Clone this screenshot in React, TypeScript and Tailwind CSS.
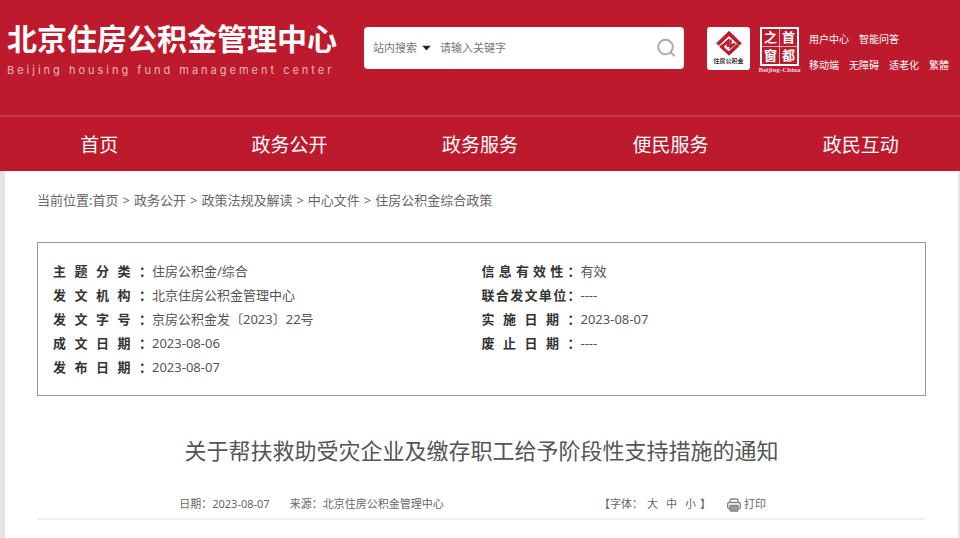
import { ReactNode } from "react";

const navItems = ["首页", "政务公开", "政务服务", "便民服务", "政民互动"];

const crumbs = ["首页", "政务公开", "政策法规及解读", "中心文件", "住房公积金综合政策"];

const quickLinks = [
  ["用户中心", "智能问答"],
  ["移动端", "无障碍", "适老化", "繁體"],
];

const leftInfo = [
  { label: "主题分类", value: "住房公积金/综合" },
  { label: "发文机构", value: "北京住房公积金管理中心" },
  { label: "发文字号", value: "京房公积金发〔2023〕22号" },
  { label: "成文日期", value: "2023-08-06" },
  { label: "发布日期", value: "2023-08-07" },
];

const rightInfo = [
  { label: "信息有效性", value: "有效" },
  { label: "联合发文单位", value: "----" },
  { label: "实施日期", value: "2023-08-07" },
  { label: "废止日期", value: "----" },
];

const FundLogo = () => (
  <a
    href="#"
    aria-label="住房公积金"
    className="flex h-[43px] w-[43px] shrink-0 flex-col items-center rounded-[3px] bg-white pt-1">
    <svg width="26" height="26" viewBox="0 0 26 26" className="shrink-0" fill="none" stroke="#bd1a2d">
      <path d="M1.500 13.500 13 2.500 24.500 13.500" strokeWidth="3.800" />
      <path d="M5 16.500 12 10v6" strokeWidth="2.600" />
      <path d="M4.500 14.500 13 22.500 22 14" strokeWidth="3.400" />
      <path d="M14.500 8.500v7.500l4.500-3.500" strokeWidth="2.400" />
      <path d="M8.500 15.500l3.500 3.500" stroke="#fff" strokeWidth="1.300" />
    </svg>
    <span className="text-[6px] leading-[8px] font-bold whitespace-nowrap text-[#333]">住房公积金</span>
  </a>
);

const CapitalSeal = () => (
  <a href="#" className="flex w-[43px] shrink-0 flex-col items-center">
    <span className="grid h-[39px] w-[39px] grid-cols-2 gap-px border-2 border-white bg-[#eba9b0] text-center text-[13px] leading-[17px] font-bold">
      {["之", "首", "窗", "都"].map((char) => (
        <span key={char} className="bg-[#bd1a2d]">
          {char}
        </span>
      ))}
    </span>
    <span className="font-['Liberation_Serif',serif] text-[7px] leading-[8px] font-bold whitespace-nowrap text-[#f6d5d8]">
      Beijing-China
    </span>
  </a>
);

const SearchBox = () => (
  <form
    onSubmit={(e) => e.preventDefault()}
    className="flex h-[42px] min-w-0 flex-1 items-center rounded-[4px] bg-white pr-2 pl-[9px] text-[11px] text-[#777]">
    <div className="relative shrink-0">
      <select aria-label="搜索范围" className="w-[60px] appearance-none bg-transparent leading-5 outline-none">
        <option>站内搜索</option>
      </select>
      <svg
        width="9"
        height="5"
        viewBox="0 0 9 5"
        className="pointer-events-none absolute top-1/2 right-0.5 -translate-y-1/2">
        <path d="M0 0h9L4.5 5z" fill="#222" />
      </svg>
    </div>
    <input
      type="text"
      aria-label="关键字"
      placeholder="请输入关键字"
      className="ml-[7px] min-w-0 flex-1 leading-5 outline-none placeholder:text-[#777]"
    />
    <button type="submit" aria-label="搜索" className="shrink-0">
      <svg width="20" height="20" viewBox="0 0 20 20" fill="none" stroke="#aaa" strokeWidth="2">
        <circle cx="9.5" cy="9" r="7.3" />
        <path d="m14.7 14.2 3.5 3.4" strokeLinecap="round" />
      </svg>
    </button>
  </form>
);

const Header = () => (
  <header className="bg-[#bd1a2d] text-white">
    <div className="flex h-[115px] items-start pt-[27px] pr-[11px] pl-[7px]">
      <div className="-mt-1.5 w-[357px] shrink-0">
        <p className="text-[30px] leading-9 font-bold">北京住房公积金管理中心</p>
        <p className="mt-1.5 text-[11px] leading-[14px] tracking-[3px] text-[#f0b5bb] font-['Inter',sans-serif]">
          Beijing housing fund management center
        </p>
      </div>
      <SearchBox />
      <div className="ml-[23px] flex shrink-0 gap-2">
        <FundLogo />
        <CapitalSeal />
        <div className="flex flex-col gap-2.5 pt-1 text-[10px] leading-4 whitespace-nowrap">
          {quickLinks.map((row) => (
            <div key={row[0]} className="flex gap-2.5">
              {row.map((link) => (
                <a key={link} href="#">
                  {link}
                </a>
              ))}
            </div>
          ))}
        </div>
      </div>
    </div>
    <nav className="grid h-14 grid-cols-5 items-center border-t-2 border-[#c93548] px-1 pt-0.5 text-center text-[19px]">
      {navItems.map((item) => (
        <a key={item} href="#">
          {item}
        </a>
      ))}
    </nav>
  </header>
);

const InfoRow = ({ label, children }: { label: string; children: ReactNode }) => (
  <div className="flex">
    <dt className="w-[99px] shrink-0 font-bold text-[#333] [text-align-last:justify]">{label}：</dt>
    <dd>{children}</dd>
  </div>
);

const PrintIcon = () => (
  <svg width="14" height="14" viewBox="0 0 14 14" fill="none" stroke="#858585" strokeWidth="1.3" className="mt-1">
    <path d="M3 4.5V2.2C3 1.5 3.5 1 4.2 1h5.6c.7 0 1.2.5 1.2 1.2v2.3" />
    <path d="M3 10.5H1.900C1.200 10.500.700 10 .700 9.300V5.700c0-.7.5-1.200 1.200-1.200h10.200c.7 0 1.200.5 1.200 1.200v3.600c0 .7-.5 1.200-1.200 1.200H11" />
    <path d="M3 7.500h8v4.500c0 .8-.5 1.200-1.200 1.200H4.200c-.7 0-1.200-.4-1.200-1.200z" fill="#999" />
  </svg>
);

export default function App() {
  return (
    <div className="min-h-screen bg-[#e5e5e5] font-['Noto_Sans','Noto_Sans_CJK_SC',sans-serif] text-[#555]">
      <Header />
      <main className="mr-0.5 ml-[5px] min-h-[367px] bg-white px-8 pt-[19px]">
        <div className="flex gap-1 text-[13px] leading-5 text-[#666]">
          <span>
            当前位置:<a href="#">{crumbs[0]}</a>
          </span>
          {crumbs.slice(1).map((crumb) => (
            <span key={crumb} className="flex gap-1">
              <span>&gt;</span>
              <a href="#">{crumb}</a>
            </span>
          ))}
        </div>

        <div className="mt-8 grid grid-cols-2 border border-[#999] py-4 text-[13px] leading-6">
          <dl className="pl-[15px]">
            {leftInfo.map((item) => (
              <InfoRow key={item.label} label={item.label}>
                {item.value}
              </InfoRow>
            ))}
          </dl>
          <dl>
            {rightInfo.map((item) => (
              <InfoRow key={item.label} label={item.label}>
                {item.value}
              </InfoRow>
            ))}
          </dl>
        </div>

        <h1 className="mt-[38px] text-center text-[22px] leading-8">关于帮扶救助受灾企业及缴存职工给予阶段性支持措施的通知</h1>

        <div className="mt-7 flex justify-between border-b-2 border-[#f0f0f0] pr-[18%] pb-1 pl-[16%] text-[11px] leading-5 text-[#666]">
          <div className="flex gap-5">
            <span>日期：2023-08-07</span>
            <span>来源：北京住房公积金管理中心</span>
          </div>
          <div className="flex">
            <span>【字体：</span>
            <div className="mx-1 flex gap-2">
              <button type="button">大</button>
              <button type="button">中</button>
              <button type="button">小</button>
            </div>
            <span>】</span>
            <button type="button" className="ml-4 flex gap-[3px]">
              <PrintIcon />
              打印
            </button>
          </div>
        </div>
      </main>
    </div>
  );
}
